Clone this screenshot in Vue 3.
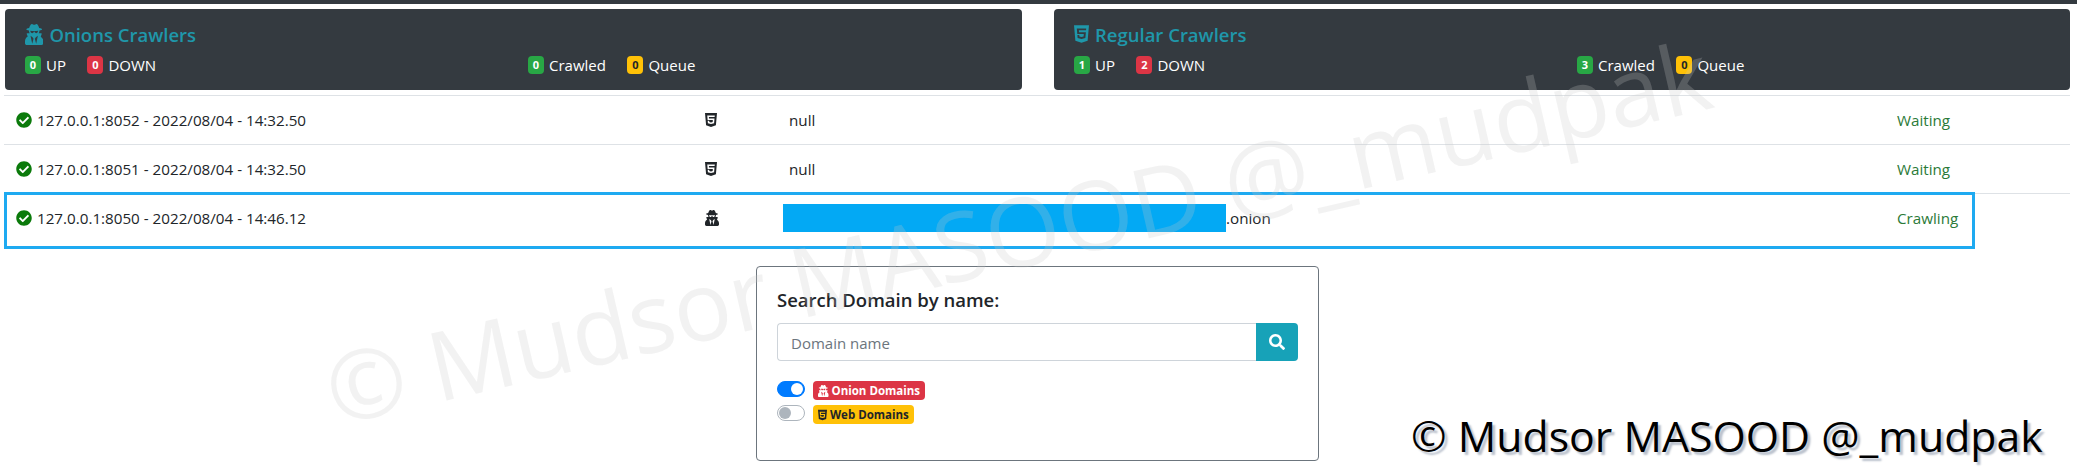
<template>
  <div class="page">
    <div class="topBar"></div>

    <div class="cards">
      <div v-for="card in cards" :key="card.title" class="crawlerCard">
        <h5 class="cardTitle">
          <svg class="titleIcon" :class="card.icon" :viewBox="icons[card.icon].box"><path :d="icons[card.icon].d" /></svg>
          {{ card.title }}
        </h5>
        <div class="cardStats">
          <div class="statGroup">
            <span class="stat"><span class="badge green">{{ card.up }}</span> UP</span>
            <span class="stat"><span class="badge red">{{ card.down }}</span> DOWN</span>
          </div>
          <div class="statGroup">
            <span class="stat"><span class="badge green">{{ card.crawled }}</span> Crawled</span>
            <span class="stat"><span class="badge yellow">{{ card.queue }}</span> Queue</span>
          </div>
        </div>
      </div>
    </div>

    <div class="crawlerTable">
      <div v-for="row in rows" :key="row.host" class="crawlerRow">
        <div class="hostCell">
          <svg class="checkIcon" viewBox="0 0 512 512"><path :d="checkPath" /></svg>
          <span>{{ row.host }}</span>
        </div>
        <div class="typeCell">
          <svg class="rowIcon" :class="row.icon" :viewBox="icons[row.icon].box"><path :d="icons[row.icon].d" /></svg>
        </div>
        <div class="domainCell">
          <template v-if="row.hidden"><span class="redacted"></span><span>.onion</span></template>
          <template v-else>null</template>
        </div>
        <div class="statusCell">{{ row.status }}</div>
        <div v-if="row.hidden" class="highlight"></div>
      </div>
    </div>

    <div class="searchCard">
      <div class="searchTitle">Search Domain by name:</div>
      <div class="searchGroup">
        <input class="searchInput" type="text" placeholder="Domain name" />
        <button class="searchButton">
          <svg viewBox="0 0 512 512"><path :d="searchPath" /></svg>
        </button>
      </div>
      <div class="toggleRow">
        <span class="toggle on"></span>
        <span class="tag tagRed">
          <svg class="tagIcon secret" :viewBox="icons.secret.box"><path :d="icons.secret.d" /></svg>
          Onion Domains
        </span>
      </div>
      <div class="toggleRow">
        <span class="toggle"></span>
        <span class="tag tagYellow">
          <svg class="tagIcon html" :viewBox="icons.html.box"><path :d="icons.html.d" /></svg>
          Web Domains
        </span>
      </div>
    </div>

    <div class="watermark">© Mudsor MASOOD @_mudpak</div>
    <div class="stamp">© Mudsor MASOOD @_mudpak</div>
  </div>
</template>

<script setup>
const icons = {
  secret: {
    box: '0 0 448 512',
    d: 'M383.9 308.3l23.9-62.6c4-10.5-3.7-21.7-15-21.7h-58.5c11-18.9 17.8-40.6 17.8-64v-.3c39.2-7.8 64-19.1 64-31.7 0-13.3-27.3-25.1-70.1-33-9.2-32.8-27-65.8-40.6-82.8-9.5-11.9-25.9-15.6-39.5-8.8l-27.6 13.8c-9 4.5-19.6 4.5-28.6 0L182.1 3.4c-13.6-6.8-30-3.1-39.5 8.8-13.5 17-31.4 50-40.6 82.8-42.7 7.9-70 19.7-70 33 0 12.6 24.8 23.9 64 31.7v.3c0 23.4 6.8 45.1 17.8 64H56.3c-11.5 0-19.2 11.7-14.7 22.3l25.8 60.2C27.3 329.8 0 372.7 0 422.4v44.8C0 491.9 20.1 512 44.8 512h358.4c24.7 0 44.8-20.1 44.8-44.8v-44.8c0-48.4-25.8-90.4-64.1-114.1zM176 480l-41.6-192 49.6 32 24 40-32 120zm96 0l-32-120 24-40 49.6-32L272 480zm41.7-298.5c-3.9 11.9-7 24.6-16.5 33.4-10.1 9.3-48 22.4-64-25-2.8-8.4-15.4-8.4-18.3 0-17 50.2-56 32.4-64 25-9.5-8.8-12.7-21.5-16.5-33.4-.8-2.5-6.3-5.7-6.3-5.8v-10.8c28.3 3.6 61 5.8 96 5.8s67.7-2.2 96-5.8v10.8c-.1.1-5.6 3.2-6.4 5.8z',
  },
  html: {
    box: '0 0 384 512',
    d: 'M0 32l34.9 395.8L191.5 480l157.6-52.2L384 32H0zm308.2 127.9H124.4l4.1 49.4h175.6l-13.6 148.4-97.9 27v.3h-1.1l-98.7-27.3-6-75.8h47.7L138 320l53.5 14.5 53.7-14.5 6-62.2H84.3L71.5 112.2h241.1l-4.4 47.7z',
  },
}

const checkPath =
  'M504 256c0 136.967-111.033 248-248 248S8 392.967 8 256 119.033 8 256 8s248 111.033 248 248zM227.314 387.314l184-184c6.248-6.248 6.248-16.379 0-22.627l-22.627-22.627c-6.248-6.249-16.379-6.249-22.628 0L216 308.118l-70.059-70.059c-6.248-6.248-16.379-6.248-22.628 0l-22.627 22.627c-6.248 6.248-6.248 16.379 0 22.627l104 104c6.249 6.25 16.379 6.25 22.628.001z'
const searchPath =
  'M505 442.7L405.3 343c-4.5-4.5-10.6-7-17-7H372c27.6-35.3 44-79.7 44-128C416 93.1 322.9 0 208 0S0 93.1 0 208s93.1 208 208 208c48.3 0 92.7-16.4 128-44v16.3c0 6.4 2.5 12.5 7 17l99.7 99.7c9.4 9.4 24.6 9.4 33.9 0l28.3-28.3c9.4-9.4 9.4-24.6.1-34zM208 336c-70.7 0-128-57.2-128-128 0-70.7 57.2-128 128-128 70.7 0 128 57.2 128 128 0 70.7-57.2 128-128 128z'

const cards = [
  { title: 'Onions Crawlers', icon: 'secret', up: 0, down: 0, crawled: 0, queue: 0 },
  { title: 'Regular Crawlers', icon: 'html', up: 1, down: 2, crawled: 3, queue: 0 },
]

const rows = [
  { host: '127.0.0.1:8052 - 2022/08/04 - 14:32.50', icon: 'html', status: 'Waiting' },
  { host: '127.0.0.1:8051 - 2022/08/04 - 14:32.50', icon: 'html', status: 'Waiting' },
  { host: '127.0.0.1:8050 - 2022/08/04 - 14:46.12', icon: 'secret', status: 'Crawling', hidden: true },
]
</script>

<style>
html,
body {
  margin: 0;
  background: #fff;
}
</style>

<style scoped>
.page {
  position: relative;
  width: 2077px;
  height: 469px;
  overflow: hidden;
  font-family: 'Open Sans', 'Noto Sans', sans-serif;
  font-size: 15.2px;
  color: #212529;
}

.topBar {
  height: 4px;
  background-color: #343a40;
}

.cards {
  display: grid;
  grid-template-columns: 1017px 1016px;
  column-gap: 32px;
  margin: 5px 0 0 5px;
}

.crawlerCard {
  height: 81px;
  box-sizing: border-box;
  padding: 14px 20px 0;
  background-color: #343a40;
  border-radius: 4px;
  color: #fff;
}

.cardTitle {
  display: flex;
  align-items: center;
  gap: 6px;
  margin: 0;
  height: 22px;
  font-size: 18.5px;
  font-weight: 600;
  color: #1f97aa;
}

.titleIcon {
  height: 21px;
  fill: #1f97aa;
}

.titleIcon.html {
  height: 20px;
}

.cardStats {
  display: grid;
  grid-template-columns: 503px 1fr;
  margin-top: 11px;
}

.statGroup {
  display: flex;
  gap: 21.5px;
}

.stat {
  display: flex;
  align-items: center;
  gap: 5px;
  font-size: 15px;
  line-height: 18px;
}

.badge {
  width: 16px;
  height: 18px;
  border-radius: 4px;
  text-align: center;
  font-size: 11px;
  font-weight: 700;
  line-height: 18px;
}

.green {
  background-color: #28a745;
}

.red {
  background-color: #dc3545;
}

.yellow {
  background-color: #ffc107;
  color: #212529;
}

.crawlerTable {
  margin: 5px 0 0 4px;
  width: 2066px;
}

.crawlerRow {
  position: relative;
  display: grid;
  grid-template-columns: 701px 84px 1108px 1fr;
  align-items: center;
  height: 48px;
  border-top: 1px solid #dee2e6;
}

.hostCell {
  display: flex;
  align-items: center;
  gap: 5px;
  padding-left: 12px;
}

.checkIcon {
  width: 16px;
  height: 16px;
  fill: #0b7a0b;
}

.rowIcon {
  display: block;
  height: 16px;
  fill: #212529;
}

.domainCell {
  display: flex;
  align-items: center;
  white-space: nowrap;
}

.redacted {
  width: 443px;
  height: 28px;
  margin-left: -6px;
  background-color: #03a9f4;
}

.statusCell {
  color: #2b7a38;
}

.highlight {
  position: absolute;
  top: -2px;
  left: 0;
  width: 1971px;
  height: 57px;
  box-sizing: border-box;
  border: 3px solid #1eaaf1;
  pointer-events: none;
}

.searchCard {
  box-sizing: border-box;
  width: 563px;
  height: 195px;
  margin: 24px 0 0 756px;
  padding: 20px;
  border: 1px solid #6c757d;
  border-radius: 4px;
}

.searchTitle {
  font-size: 18.5px;
  font-weight: 600;
  line-height: 24px;
  margin-top: 1px;
}

.searchGroup {
  display: flex;
  height: 38px;
  margin-top: 11px;
}

.searchInput {
  flex: 1;
  min-width: 0;
  box-sizing: border-box;
  padding: 1px 13px 0;
  border: 1px solid #ced4da;
  border-right: none;
  border-radius: 4px 0 0 4px;
  outline: none;
  background: transparent;
  font-family: inherit;
  font-size: 15px;
}

.searchInput::placeholder {
  color: #6c757d;
}

.searchButton {
  width: 42px;
  border: none;
  padding: 0;
  border-radius: 0 4px 4px 0;
  background-color: #17a2b8;
  display: flex;
  align-items: center;
  justify-content: center;
}

.searchButton svg {
  width: 16px;
  height: 16px;
  fill: #fff;
}

.toggleRow {
  display: flex;
  align-items: flex-start;
  gap: 8px;
  height: 24px;
}

.searchGroup + .toggleRow {
  margin-top: 20px;
}

.toggle {
  position: relative;
  box-sizing: border-box;
  width: 28px;
  height: 16px;
  border: 1px solid #adb5bd;
  border-radius: 8px;
  background-color: #fff;
}

.toggle::after {
  content: '';
  position: absolute;
  top: 1px;
  left: 1px;
  width: 12px;
  height: 12px;
  border-radius: 50%;
  background-color: #adb5bd;
}

.toggle.on {
  border-color: #007bff;
  background-color: #007bff;
}

.toggle.on::after {
  left: 13px;
  background-color: #fff;
}

.tag {
  display: flex;
  align-items: center;
  gap: 3px;
  height: 19px;
  padding: 0 5px;
  border-radius: 4px;
  font-size: 11.5px;
  font-weight: 700;
  white-space: nowrap;
}

.tagRed {
  background-color: #dc3545;
  color: #fff;
}

.tagRed .tagIcon {
  fill: #fff;
}

.tagYellow {
  background-color: #ffc107;
  color: #212529;
}

.tagYellow .tagIcon {
  fill: #212529;
}

.tagIcon {
  height: 12px;
}

.watermark {
  position: absolute;
  left: 327px;
  top: 330px;
  font-size: 96px;
  line-height: 120px;
  white-space: nowrap;
  color: rgba(200, 200, 200, 0.24);
  transform: rotate(-13deg);
  transform-origin: left center;
  pointer-events: none;
}

.stamp {
  position: absolute;
  left: 1411px;
  top: 408px;
  font-size: 42.8px;
  line-height: 56px;
  white-space: nowrap;
  color: #000;
  text-shadow: 3px 3px 2px #b9c0cc;
}
</style>
